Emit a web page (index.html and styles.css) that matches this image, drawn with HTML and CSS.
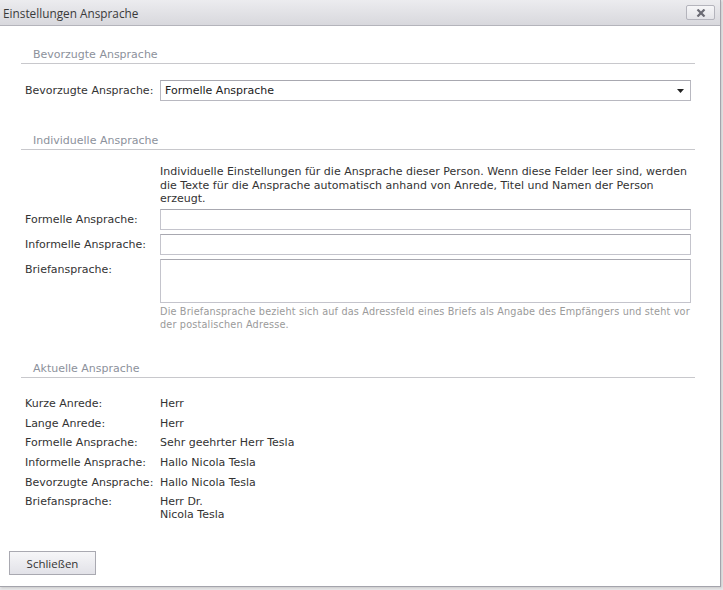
FILE: index.html
```html
<!DOCTYPE html>
<html lang="de">
<head>
<meta charset="utf-8">
<title>Einstellungen Ansprache</title>
<link rel="stylesheet" href="styles.css">
</head>
<body>
<div class="window">
  <div class="titlebar">
    <span class="title">Einstellungen Ansprache</span>
    <button class="close" type="button" aria-label="Schließen">
      <svg width="10" height="8" viewBox="0 0 10 8"><path d="M1.5 0.5 L8.5 7.5 M8.5 0.5 L1.5 7.5" stroke="#6b6b74" stroke-width="2.2"/></svg>
    </button>
  </div>
  <div class="content">
    <div class="section">
      <div class="section-head">Bevorzugte Ansprache</div>
      <div class="form-row first">
        <label class="label">Bevorzugte Ansprache:</label>
        <div class="select">
          <span>Formelle Ansprache</span>
          <svg class="caret" width="7" height="4" viewBox="0 0 7 4"><path d="M0 0 H7 L3.5 4 Z" fill="#222"/></svg>
        </div>
      </div>
    </div>

    <div class="section s2">
      <div class="section-head">Individuelle Ansprache</div>
      <div class="form-grid">
        <div></div>
        <p class="desc">Individuelle Einstellungen für die Ansprache dieser Person. Wenn diese Felder leer sind, werden die Texte für die Ansprache automatisch anhand von Anrede, Titel und Namen der Person erzeugt.</p>
        <label class="label">Formelle Ansprache:</label>
        <div class="input"></div>
        <label class="label">Informelle Ansprache:</label>
        <div class="input"></div>
        <label class="label top">Briefansprache:</label>
        <div class="textarea"></div>
        <div></div>
        <p class="help">Die Briefansprache bezieht sich auf das Adressfeld eines Briefs als Angabe des Empfängers und steht vor der postalischen Adresse.</p>
      </div>
    </div>

    <div class="section s3">
      <div class="section-head">Aktuelle Ansprache</div>
      <div class="info-grid">
        <div class="k">Kurze Anrede:</div><div class="v">Herr</div>
        <div class="k">Lange Anrede:</div><div class="v">Herr</div>
        <div class="k">Formelle Ansprache:</div><div class="v">Sehr geehrter Herr Tesla</div>
        <div class="k">Informelle Ansprache:</div><div class="v">Hallo Nicola Tesla</div>
        <div class="k">Bevorzugte Ansprache:</div><div class="v">Hallo Nicola Tesla</div>
        <div class="k">Briefansprache:</div><div class="v">Herr Dr.<br>Nicola Tesla</div>
      </div>
    </div>
  </div>
  <div class="footer">
    <button class="btn" type="button">Schließen</button>
  </div>
</div>
</body>
</html>
```

FILE: styles.css
```css
html, body {
  margin: 0;
  padding: 0;
  background: #e6e6e8;
}
body {
  width: 723px;
  height: 590px;
  overflow: hidden;
  font-family: "DejaVu Sans", Verdana, sans-serif;
  font-size: 11px;
  color: #333;
}
.window {
  width: 720px;
  height: 586px;
  background: #fff;
  border-right: 1px solid #a4a4ac;
  border-bottom: 1px solid #a4a4ac;
  box-shadow: 1px 1px 2px rgba(0,0,0,0.12);
  display: flex;
  flex-direction: column;
}
.titlebar {
  height: 25px;
  border-bottom: 1px solid #b4b4bb;
  background: linear-gradient(#ececef, #d8d8dd);
  display: flex;
  align-items: center;
  justify-content: space-between;
  padding: 0 5px 0 3px;
}
.title {
  font-family: "Open Sans", "Noto Sans", sans-serif;
  font-size: 11.8px;
  color: #3a3a3a;
}
.close {
  width: 29px;
  height: 15px;
  margin: 0;
  padding: 0;
  border: 1px solid #b4b4bc;
  border-radius: 2px;
  background: linear-gradient(#f6f6f8, #e4e4e8);
  display: flex;
  align-items: center;
  justify-content: center;
}
.content {
  flex: 1;
  padding: 19px 25px 0 21px;
}
.section-head {
  height: 16px;
  padding-top: 2px;
  line-height: 16px;
  padding-left: 12px;
  border-bottom: 1px solid #c8c8cc;
  color: #8c919b;
}
.s2 { margin-top: 30px; }
.s3 { margin-top: 28px; }
.form-row {
  display: grid;
  grid-template-columns: 135px 1fr;
  align-items: center;
  padding: 0 4px;
}
.form-row.first { margin-top: 16px; }
.select {
  height: 19px;
  border: 1px solid #b8b8c0;
  border-top-color: #a8a8b0;
  display: flex;
  align-items: center;
  justify-content: space-between;
  padding: 0 6px 0 4px;
  color: #222;
}
.form-grid {
  display: grid;
  grid-template-columns: 135px 1fr;
  row-gap: 4px;
  padding: 0 4px;
  margin-top: 15px;
}
.form-grid .label { align-self: center; }
.form-grid .label.top { align-self: start; padding-top: 4px; }
.desc {
  margin: 0 0 -1px;
  line-height: 13.5px;
  color: #333;
}
.input {
  height: 19px;
  border: 1px solid #c4c4cc;
  border-top-color: #a8a8b0;
}
.textarea {
  height: 42px;
  border: 1px solid #c4c4cc;
  border-top-color: #a8a8b0;
}
.help {
  margin: -2px 0 0;
  font-size: 9.7px;
  line-height: 13px;
  letter-spacing: 0.17px;
  color: #9a9a9a;
}
.info-grid {
  display: grid;
  grid-template-columns: 135px 1fr;
  padding: 0 4px;
  margin-top: 16px;
  line-height: 13px;
}
.k, .v {
  padding: 3.35px 0;
}
.v { color: #333; }
.footer {
  padding: 0 0 11px 9px;
}
.btn {
  width: 87px;
  height: 24px;
  margin: 0;
  border: 1px solid #a9a9b1;
  background: linear-gradient(#f6f6f8, #e2e2e8);
  font-family: "Open Sans", "Noto Sans", sans-serif;
  font-size: 11.5px;
  color: #333;
}
```
